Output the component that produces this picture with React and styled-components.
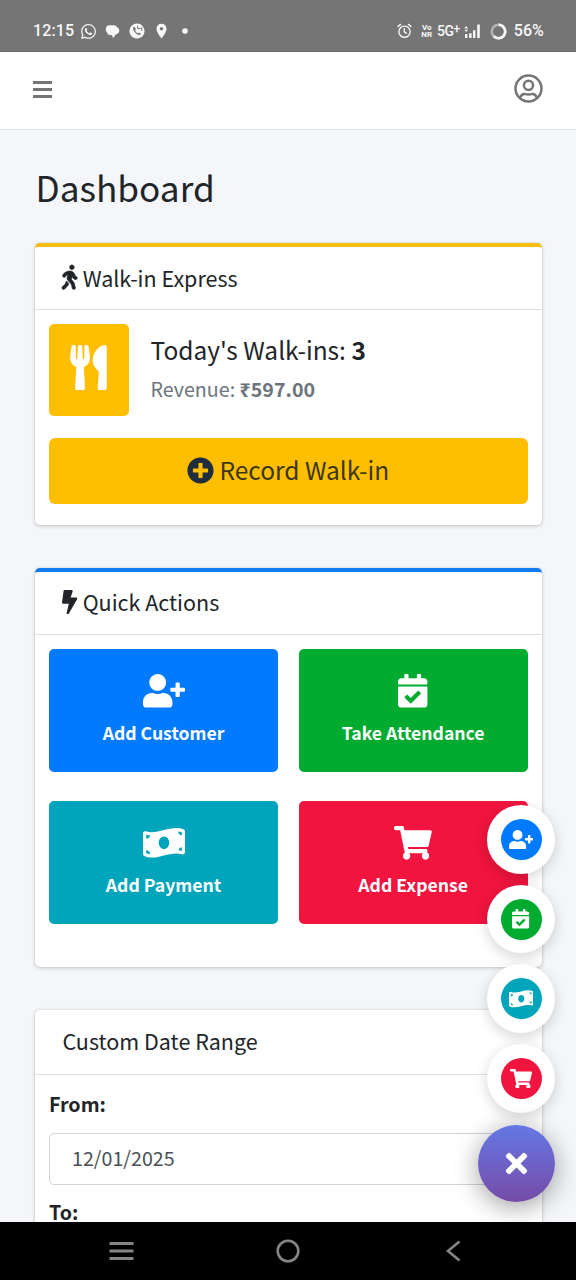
import React from 'react';
import styled, { createGlobalStyle, css } from 'styled-components';
import {
  FaUserPlus,
  FaCalendarCheck,
  FaMoneyBillWave,
  FaShoppingCart,
  FaWalking,
  FaBolt,
  FaUtensils,
  FaPlusCircle,
  FaTimes,
  FaWhatsapp,
} from 'react-icons/fa';

const GlobalStyle = createGlobalStyle`
  *, *::before, *::after { box-sizing: border-box; }
  html, body { margin: 0; padding: 0; }
  body {
    background: #f4f6f9;
    color: #212529;
    font-family: "Noto Sans CJK SC", "Noto Sans", sans-serif;
    font-size: 19.65px;
  }
  h1, h2, p { margin: 0; font-weight: 400; }
  button { font: inherit; border: 0; padding: 0; color: inherit; }
  svg { display: block; flex: none; }
`;

const colors = {
  primary: '#007bff',
  success: '#00ab30',
  info: '#00a5bb',
  danger: '#f0143f',
  warning: '#ffbf00',
};

const Phone = styled.div`
  position: relative;
  display: flex;
  flex-direction: column;
  width: 576px;
  height: 1280px;
  overflow: hidden;
`;

const StatusBar = styled.header`
  flex: none;
  display: flex;
  justify-content: space-between;
  align-items: center;
  height: 52px;
  padding: 11px 32px 0 33px;
  background: #757575;
  border-bottom: 1px solid #696969;
  color: #f7f7f7;
  font: 500 16px/20px Roboto, sans-serif;
  letter-spacing: 0.1px;
`;

const StatusGroup = styled.div`
  display: flex;
  align-items: center;
`;

const StatusItem = styled.span`
  display: flex;
  margin-left: ${(p) => p.$gap}px;
`;

const Network = styled.span`
  margin-left: 5px;
  font-size: 14px;
  font-weight: 500;
  letter-spacing: -0.5px;
  sup { font-size: 12px; line-height: 0; vertical-align: 3px; }
`;

const VoNr = styled.span`
  display: flex;
  flex-direction: column;
  margin-left: 9px;
  font-size: 8px;
  line-height: 7px;
  font-weight: 700;
  text-align: center;
  letter-spacing: 0;
`;

const NavBar = styled.nav`
  flex: none;
  display: flex;
  justify-content: space-between;
  align-items: center;
  height: 78px;
  padding: 0 33px 4px 33px;
  background: #fff;
  border-bottom: 1px solid #dee2e6;
  color: #757575;
`;

const Content = styled.main`
  flex: 1;
  min-height: 0;
  overflow: hidden;
  padding: 35px 34px 0 35px;
`;

const Title = styled.h1`
  margin: 0 0 34px 0.5px;
  font-size: 35.2px;
  line-height: 44px;
`;

const Card = styled.section`
  margin-bottom: ${(p) => p.$gapAfter || 43}px;
  background: #fff;
  border-radius: 5px;
  box-shadow: 0 0 1px rgba(0, 0, 0, 0.2), 0 1px 4px rgba(0, 0, 0, 0.2);
  ${(p) => p.$accent && css`border-top: 4.4px solid ${p.$accent};`}
`;

const CardHeader = styled.div`
  display: flex;
  align-items: center;
  gap: 5px;
  height: ${(p) => p.$height}px;
  padding: 0 27.4px ${(p) => p.$lift || 1}px;
  border-bottom: 1px solid #dfdfdf;
`;

const CardTitle = styled.h2`
  font-size: 21.5px;
  line-height: 28px;
`;

const CardBody = styled.div`
  padding: 14px 14.4px ${(p) => p.$bottom}px 14px;
`;

const Glyph = styled.span`
  display: flex;
  flex: none;
  svg {
    height: ${(p) => p.$height}px;
    width: ${(p) => p.$height * p.$ratio}px;
    ${(p) => p.$weight && css`
      overflow: visible;
      stroke-width: ${p.$weight}px;
    `}
  }
`;

const Summary = styled.div`
  display: flex;
  align-items: center;
  gap: 22px;
`;

const SummaryIcon = styled.div`
  display: flex;
  justify-content: center;
  align-items: center;
  width: 79.6px;
  height: 92px;
  padding-bottom: 5px;
  border-radius: 5px;
  background: ${colors.warning};
  color: #fff;
`;

const SummaryTitle = styled.p`
  font-size: 24.5px;
  line-height: 40px;
`;

const SummaryNote = styled.p`
  padding-bottom: 3px;
  line-height: 37px;
  color: #6c757d;
`;

const RecordButton = styled.button`
  display: flex;
  justify-content: center;
  align-items: center;
  gap: 5px;
  width: 100%;
  height: 66px;
  margin-top: 22px;
  padding-bottom: 2px;
  border-radius: 6px;
  background: ${colors.warning};
  color: #1f2d3d;
  font-size: 24.5px;
  line-height: 34px;
`;

const ButtonLabel = styled.span`
  color: #3c3614;
`;

const ActionGrid = styled.div`
  display: grid;
  grid-template-columns: 1fr 1fr;
  gap: 28.6px 20.6px;
`;

const ActionTile = styled.button`
  display: flex;
  flex-direction: column;
  align-items: center;
  gap: 12px;
  height: 123.4px;
  padding-top: 25px;
  border-radius: 5px;
  background: ${(p) => colors[p.$tone]};
  color: #fff;
  font-size: 17.6px;
  font-weight: 700;
  line-height: 26px;
`;

const Label = styled.label`
  display: block;
  font-weight: 700;
  line-height: 30px;
  margin-bottom: ${(p) => p.$after || 0}px;
`;

const DateField = styled.div`
  display: flex;
  align-items: center;
  height: 52px;
  margin-bottom: 12px;
  padding: 0 22px 3px;
  border: 1px solid #ced4da;
  border-radius: 5px;
  color: #495057;
`;

const FabStack = styled.div`
  position: absolute;
  right: 20.6px;
  top: 805px;
  display: flex;
  flex-direction: column;
  align-items: flex-end;
  gap: 11px;
`;

const Fab = styled.button`
  display: flex;
  justify-content: center;
  align-items: center;
  width: 68.7px;
  height: 68.7px;
  border-radius: 50%;
  background: #fff;
  box-shadow: 0 4px 14px rgba(0, 0, 0, 0.17);
`;

const FabDot = styled.span`
  display: flex;
  justify-content: center;
  align-items: center;
  width: 41px;
  height: 41px;
  border-radius: 50%;
  background: ${(p) => colors[p.$tone]};
  color: #fff;
`;

const FabMain = styled.button`
  display: flex;
  justify-content: center;
  align-items: center;
  width: 77px;
  height: 77px;
  margin-top: 1px;
  border-radius: 50%;
  background: linear-gradient(180deg, #6478e4, #764ba8);
  box-shadow: 0 5px 26px rgba(0, 0, 0, 0.38);
  color: #fff;
`;

const SystemNav = styled.footer`
  flex: none;
  display: flex;
  justify-content: space-between;
  align-items: center;
  height: 58px;
  padding: 0 112px 0 108px;
  background: #000;
  color: #858585;
`;

const AlarmIcon = () => (
  <svg width="15" height="16" viewBox="0 0 15 16" fill="none" stroke="currentColor" strokeWidth="1.4" strokeLinecap="round">
    <circle cx="7.5" cy="8.7" r="5.6" />
    <path d="M7.3 5.8v3.1l2 1.3M1 3.4l2.6-2M14 3.4l-2.6-2" />
  </svg>
);

const SignalIcon = () => (
  <svg width="17" height="16" viewBox="0 0 17 16" fill="currentColor">
    <path d="M2.2 3l2 2.4H.2zM2.2 9L.4 6.7H4zM1 11h2.4v4H1zM5.2 10.2h2.4v4.8H5.2zM9 7.2h2.4V15H9zM13.2 1.5h2.6V15h-2.6z" />
  </svg>
);

const BatteryRing = () => (
  <svg width="17" height="17" viewBox="0 0 17 17" fill="none" strokeWidth="2.6">
    <circle cx="8.5" cy="8.5" r="6.7" stroke="#b0b0b0" />
    <path d="M8.5 1.8a6.7 6.7 0 1 1-4.7 11.5" stroke="#fafafa" />
  </svg>
);

const ChatIcon = () => (
  <svg width="15" height="15" viewBox="0 0 15 15" fill="currentColor">
    <path d="M4.5 1.2h4.3c1.8 0 3 .9 3.6 2.4 1.2.7 1.9 1.7 1.9 3 0 2-1.3 3.3-3.3 3.7L8.3 13.9 6.6 11H5C3.3 10.9 2.2 9.8 1.9 8.3 1 7.5.7 6.4.8 5.1c.1-2.3 1.5-3.9 3.7-3.9z" />
  </svg>
);

const CallIcon = () => (
  <svg width="16" height="16" viewBox="0 0 16 16">
    <circle cx="8" cy="8" r="7.6" fill="currentColor" />
    <path d="M5 3.6c-2 1.5-.5 4.5 1.5 6.4s4.5 2.7 5.5 1l-2-1.6-1.3.9C7.5 9.7 6.5 8.5 6.1 7.3l.9-1.2z" fill="#757575" />
    <path d="M8.6 2.8v2.6M8.6 5.4h3M12.8 4.2v3.4" stroke="#757575" strokeWidth="1" fill="none" />
  </svg>
);

const PinIcon = () => (
  <svg width="11" height="16" viewBox="0 0 11 16">
    <path d="M5.5.7a5 5 0 0 1 5 5c0 3.6-5 9.7-5 9.7s-5-6.1-5-9.7a5 5 0 0 1 5-5z" fill="currentColor" />
    <circle cx="5.5" cy="5.7" r="1.7" fill="#757575" />
  </svg>
);

const DotIcon = () => (
  <svg width="6" height="6" viewBox="0 0 6 6"><circle cx="3" cy="3" r="2.8" fill="currentColor" /></svg>
);

const ProfileIcon = () => (
  <svg width="29" height="29" viewBox="0 0 29 29" fill="none" stroke="currentColor" strokeWidth="2.5">
    <circle cx="14.5" cy="14.5" r="13" />
    <circle cx="14.5" cy="11.3" r="4.6" />
    <path d="M6 23.6c1.3-2.8 3.2-3.9 5.2-3.5 2.2.6 4.4.6 6.6 0 2-.4 3.9.7 5.2 3.5" />
  </svg>
);

const HamburgerIcon = () => (
  <svg width="19" height="18" viewBox="0 0 19 18" stroke="currentColor" strokeWidth="2.8">
    <path d="M0 2.5h19M0 9.5h19M0 16.5h19" />
  </svg>
);

const RecentsIcon = () => (
  <svg width="26" height="20" viewBox="0 0 26 20" stroke="currentColor" strokeWidth="2.8">
    <path d="M1.5 2.5h24M1.5 10h24M1.5 17.5h24" />
  </svg>
);

const HomeIcon = () => (
  <svg width="24" height="24" viewBox="0 0 24 24" fill="none" stroke="currentColor" strokeWidth="2.6">
    <circle cx="12" cy="12" r="10.3" />
  </svg>
);

const BackIcon = () => (
  <svg width="22" height="22" viewBox="0 0 22 22" fill="none" stroke="currentColor" strokeWidth="2.6">
    <path d="M17.5 1.5L6 11l11.5 9.5" />
  </svg>
);

const actions = [
  { tone: 'primary', label: 'Add Customer', Icon: FaUserPlus, ratio: 1.25 },
  { tone: 'success', label: 'Take Attendance', Icon: FaCalendarCheck, ratio: 0.875 },
  { tone: 'info', label: 'Add Payment', Icon: FaMoneyBillWave, ratio: 1.25 },
  { tone: 'danger', label: 'Add Expense', Icon: FaShoppingCart, ratio: 1.125 },
];

export default function App() {
  return (
    <Phone>
      <GlobalStyle />
      <StatusBar>
        <StatusGroup>
          12:15
          <StatusItem $gap={6}><FaWhatsapp size={17} /></StatusItem>
          <StatusItem $gap={8}><ChatIcon /></StatusItem>
          <StatusItem $gap={9}><CallIcon /></StatusItem>
          <StatusItem $gap={11}><PinIcon /></StatusItem>
          <StatusItem $gap={15}><DotIcon /></StatusItem>
        </StatusGroup>
        <StatusGroup>
          <AlarmIcon />
          <VoNr><span>Vo</span><span>NR</span></VoNr>
          <Network>5G<sup>+</sup></Network>
          <StatusItem $gap={4}><SignalIcon /></StatusItem>
          <StatusItem $gap={9}><BatteryRing /></StatusItem>
          <StatusItem $gap={7}>56%</StatusItem>
        </StatusGroup>
      </StatusBar>

      <NavBar>
        <HamburgerIcon />
        <ProfileIcon />
      </NavBar>

      <Content>
        <Title>Dashboard</Title>

        <Card $accent="#fabf14">
          <CardHeader $height={63}>
            <Glyph $height={24.4} $ratio={0.625} $weight={16}><FaWalking /></Glyph>
            <CardTitle>Walk-in Express</CardTitle>
          </CardHeader>
          <CardBody $bottom={21}>
            <Summary>
              <SummaryIcon><FaUtensils size={45} /></SummaryIcon>
              <div>
                <SummaryTitle>Today's Walk-ins: <b>3</b></SummaryTitle>
                <SummaryNote>Revenue: <b>₹597.00</b></SummaryNote>
              </div>
            </Summary>
            <RecordButton>
              <FaPlusCircle size={27} />
              <ButtonLabel>Record Walk-in</ButtonLabel>
            </RecordButton>
          </CardBody>
        </Card>

        <Card $accent="#117cf0">
          <CardHeader $height={63} $lift={2}>
            <Glyph $height={24.4} $ratio={0.625}><FaBolt /></Glyph>
            <CardTitle>Quick Actions</CardTitle>
          </CardHeader>
          <CardBody $bottom={43}>
            <ActionGrid>
              {actions.map(({ tone, label, Icon, ratio }) => (
                <ActionTile key={tone} $tone={tone}>
                  <Glyph $height={33.6} $ratio={ratio}><Icon /></Glyph>
                  {label}
                </ActionTile>
              ))}
            </ActionGrid>
          </CardBody>
        </Card>

        <Card>
          <CardHeader $height={65} $lift={3}>
            <CardTitle>Custom Date Range</CardTitle>
          </CardHeader>
          <CardBody $bottom={20}>
            <Label $after={13.4}>From:</Label>
            <DateField>12/01/2025</DateField>
            <Label>To:</Label>
          </CardBody>
        </Card>
      </Content>

      <FabStack>
        {actions.map(({ tone, label, Icon, ratio }) => (
          <Fab key={tone} aria-label={label}>
            <FabDot $tone={tone}>
              <Glyph $height={19.6} $ratio={ratio}><Icon /></Glyph>
            </FabDot>
          </Fab>
        ))}
        <FabMain aria-label="Close"><FaTimes size={31} /></FabMain>
      </FabStack>

      <SystemNav>
        <RecentsIcon />
        <HomeIcon />
        <BackIcon />
      </SystemNav>
    </Phone>
  );
}
